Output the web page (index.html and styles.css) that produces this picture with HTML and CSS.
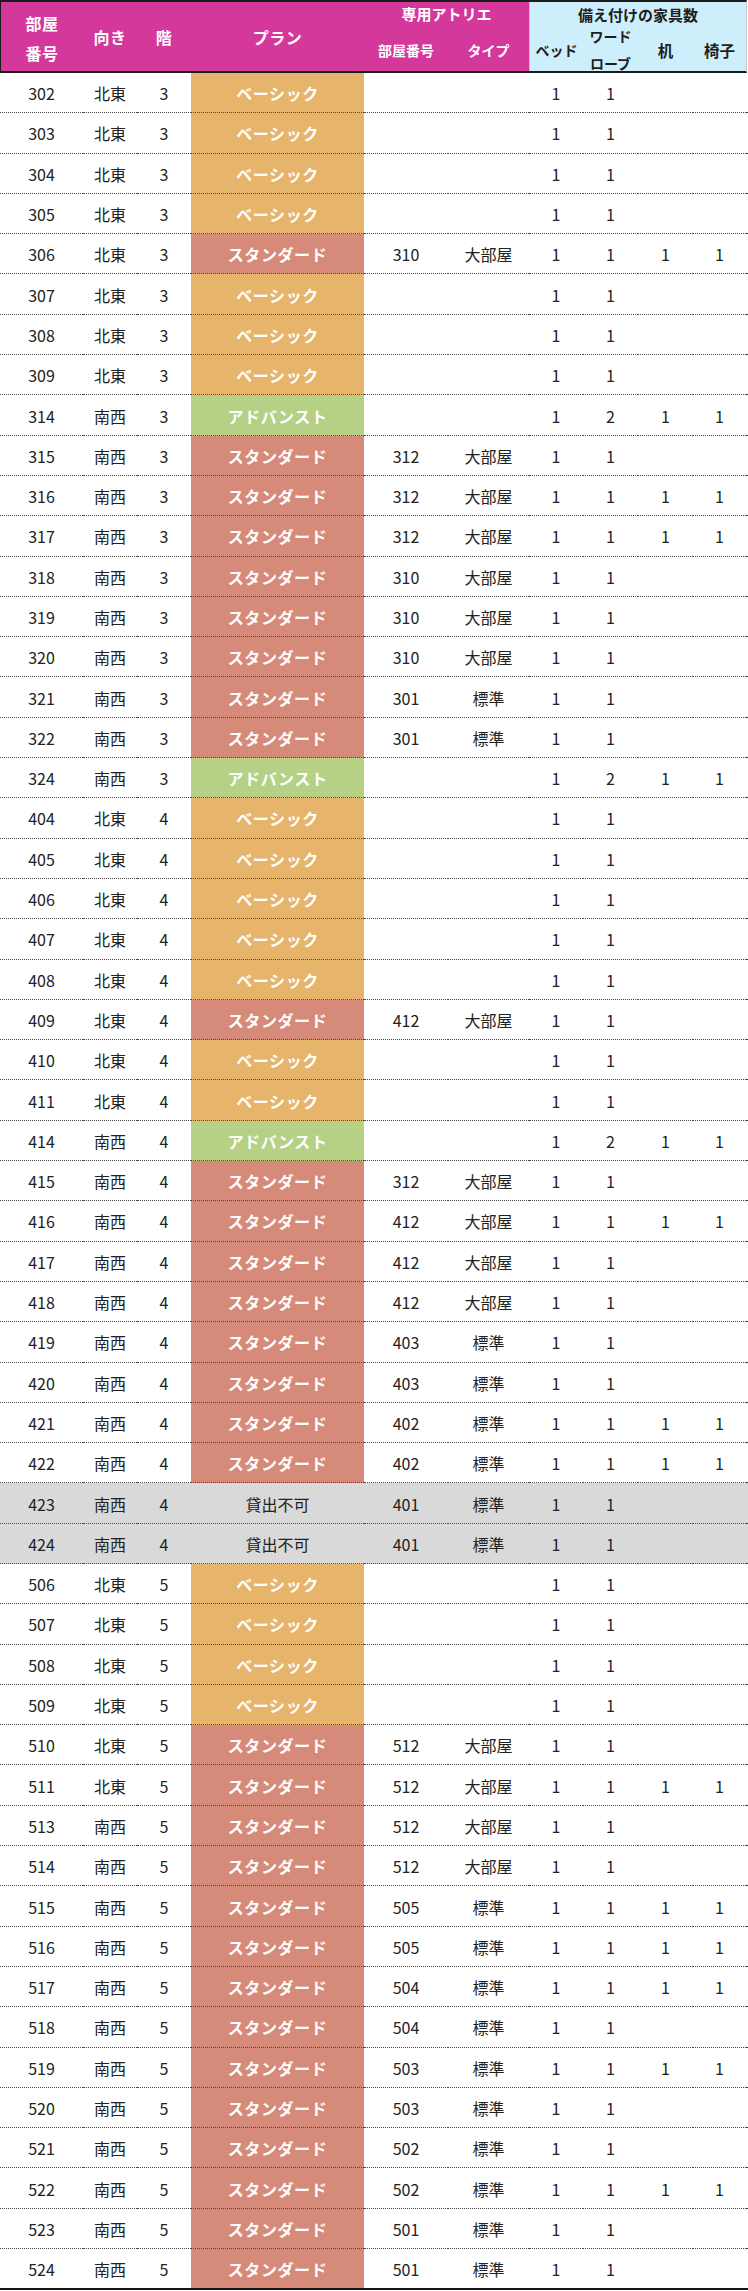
FILE: index.html
```html
<!DOCTYPE html>
<html lang="ja">
<head>
<meta charset="utf-8">
<title>部屋一覧</title>
<link rel="stylesheet" href="styles.css">
</head>
<body>
<div class="sheet">
  <div class="head">
    <div class="h mg span2 two">部屋<br>番号</div>
    <div class="h mg span2">向き</div>
    <div class="h mg span2">階</div>
    <div class="h mg span2">プラン</div>
    <div class="h mg top atl">専用アトリエ</div>
    <div class="h bl top fur">備え付けの家具数</div>
    <div class="h mg sub">部屋番号</div>
    <div class="h mg sub">タイプ</div>
    <div class="h bl sub">ベッド</div>
    <div class="h bl sub wr">ワード<br>ローブ</div>
    <div class="h bl sub big">机</div>
    <div class="h bl sub big">椅子</div>
  </div>
  <div class="body">
    <div class="r"><span>302</span><span>北東</span><span>3</span><span class="p b">ベーシック</span><span></span><span></span><span>1</span><span>1</span><span></span><span></span></div>
    <div class="r"><span>303</span><span>北東</span><span>3</span><span class="p b">ベーシック</span><span></span><span></span><span>1</span><span>1</span><span></span><span></span></div>
    <div class="r"><span>304</span><span>北東</span><span>3</span><span class="p b">ベーシック</span><span></span><span></span><span>1</span><span>1</span><span></span><span></span></div>
    <div class="r"><span>305</span><span>北東</span><span>3</span><span class="p b">ベーシック</span><span></span><span></span><span>1</span><span>1</span><span></span><span></span></div>
    <div class="r"><span>306</span><span>北東</span><span>3</span><span class="p s">スタンダード</span><span>310</span><span>大部屋</span><span>1</span><span>1</span><span>1</span><span>1</span></div>
    <div class="r"><span>307</span><span>北東</span><span>3</span><span class="p b">ベーシック</span><span></span><span></span><span>1</span><span>1</span><span></span><span></span></div>
    <div class="r"><span>308</span><span>北東</span><span>3</span><span class="p b">ベーシック</span><span></span><span></span><span>1</span><span>1</span><span></span><span></span></div>
    <div class="r"><span>309</span><span>北東</span><span>3</span><span class="p b">ベーシック</span><span></span><span></span><span>1</span><span>1</span><span></span><span></span></div>
    <div class="r"><span>314</span><span>南西</span><span>3</span><span class="p a">アドバンスト</span><span></span><span></span><span>1</span><span>2</span><span>1</span><span>1</span></div>
    <div class="r"><span>315</span><span>南西</span><span>3</span><span class="p s">スタンダード</span><span>312</span><span>大部屋</span><span>1</span><span>1</span><span></span><span></span></div>
    <div class="r"><span>316</span><span>南西</span><span>3</span><span class="p s">スタンダード</span><span>312</span><span>大部屋</span><span>1</span><span>1</span><span>1</span><span>1</span></div>
    <div class="r"><span>317</span><span>南西</span><span>3</span><span class="p s">スタンダード</span><span>312</span><span>大部屋</span><span>1</span><span>1</span><span>1</span><span>1</span></div>
    <div class="r"><span>318</span><span>南西</span><span>3</span><span class="p s">スタンダード</span><span>310</span><span>大部屋</span><span>1</span><span>1</span><span></span><span></span></div>
    <div class="r"><span>319</span><span>南西</span><span>3</span><span class="p s">スタンダード</span><span>310</span><span>大部屋</span><span>1</span><span>1</span><span></span><span></span></div>
    <div class="r"><span>320</span><span>南西</span><span>3</span><span class="p s">スタンダード</span><span>310</span><span>大部屋</span><span>1</span><span>1</span><span></span><span></span></div>
    <div class="r"><span>321</span><span>南西</span><span>3</span><span class="p s">スタンダード</span><span>301</span><span>標準</span><span>1</span><span>1</span><span></span><span></span></div>
    <div class="r"><span>322</span><span>南西</span><span>3</span><span class="p s">スタンダード</span><span>301</span><span>標準</span><span>1</span><span>1</span><span></span><span></span></div>
    <div class="r"><span>324</span><span>南西</span><span>3</span><span class="p a">アドバンスト</span><span></span><span></span><span>1</span><span>2</span><span>1</span><span>1</span></div>
    <div class="r"><span>404</span><span>北東</span><span>4</span><span class="p b">ベーシック</span><span></span><span></span><span>1</span><span>1</span><span></span><span></span></div>
    <div class="r"><span>405</span><span>北東</span><span>4</span><span class="p b">ベーシック</span><span></span><span></span><span>1</span><span>1</span><span></span><span></span></div>
    <div class="r"><span>406</span><span>北東</span><span>4</span><span class="p b">ベーシック</span><span></span><span></span><span>1</span><span>1</span><span></span><span></span></div>
    <div class="r"><span>407</span><span>北東</span><span>4</span><span class="p b">ベーシック</span><span></span><span></span><span>1</span><span>1</span><span></span><span></span></div>
    <div class="r"><span>408</span><span>北東</span><span>4</span><span class="p b">ベーシック</span><span></span><span></span><span>1</span><span>1</span><span></span><span></span></div>
    <div class="r"><span>409</span><span>北東</span><span>4</span><span class="p s">スタンダード</span><span>412</span><span>大部屋</span><span>1</span><span>1</span><span></span><span></span></div>
    <div class="r"><span>410</span><span>北東</span><span>4</span><span class="p b">ベーシック</span><span></span><span></span><span>1</span><span>1</span><span></span><span></span></div>
    <div class="r"><span>411</span><span>北東</span><span>4</span><span class="p b">ベーシック</span><span></span><span></span><span>1</span><span>1</span><span></span><span></span></div>
    <div class="r"><span>414</span><span>南西</span><span>4</span><span class="p a">アドバンスト</span><span></span><span></span><span>1</span><span>2</span><span>1</span><span>1</span></div>
    <div class="r"><span>415</span><span>南西</span><span>4</span><span class="p s">スタンダード</span><span>312</span><span>大部屋</span><span>1</span><span>1</span><span></span><span></span></div>
    <div class="r"><span>416</span><span>南西</span><span>4</span><span class="p s">スタンダード</span><span>412</span><span>大部屋</span><span>1</span><span>1</span><span>1</span><span>1</span></div>
    <div class="r"><span>417</span><span>南西</span><span>4</span><span class="p s">スタンダード</span><span>412</span><span>大部屋</span><span>1</span><span>1</span><span></span><span></span></div>
    <div class="r"><span>418</span><span>南西</span><span>4</span><span class="p s">スタンダード</span><span>412</span><span>大部屋</span><span>1</span><span>1</span><span></span><span></span></div>
    <div class="r"><span>419</span><span>南西</span><span>4</span><span class="p s">スタンダード</span><span>403</span><span>標準</span><span>1</span><span>1</span><span></span><span></span></div>
    <div class="r"><span>420</span><span>南西</span><span>4</span><span class="p s">スタンダード</span><span>403</span><span>標準</span><span>1</span><span>1</span><span></span><span></span></div>
    <div class="r"><span>421</span><span>南西</span><span>4</span><span class="p s">スタンダード</span><span>402</span><span>標準</span><span>1</span><span>1</span><span>1</span><span>1</span></div>
    <div class="r"><span>422</span><span>南西</span><span>4</span><span class="p s">スタンダード</span><span>402</span><span>標準</span><span>1</span><span>1</span><span>1</span><span>1</span></div>
    <div class="r na"><span>423</span><span>南西</span><span>4</span><span>貸出不可</span><span>401</span><span>標準</span><span>1</span><span>1</span><span></span><span></span></div>
    <div class="r na"><span>424</span><span>南西</span><span>4</span><span>貸出不可</span><span>401</span><span>標準</span><span>1</span><span>1</span><span></span><span></span></div>
    <div class="r"><span>506</span><span>北東</span><span>5</span><span class="p b">ベーシック</span><span></span><span></span><span>1</span><span>1</span><span></span><span></span></div>
    <div class="r"><span>507</span><span>北東</span><span>5</span><span class="p b">ベーシック</span><span></span><span></span><span>1</span><span>1</span><span></span><span></span></div>
    <div class="r"><span>508</span><span>北東</span><span>5</span><span class="p b">ベーシック</span><span></span><span></span><span>1</span><span>1</span><span></span><span></span></div>
    <div class="r"><span>509</span><span>北東</span><span>5</span><span class="p b">ベーシック</span><span></span><span></span><span>1</span><span>1</span><span></span><span></span></div>
    <div class="r"><span>510</span><span>北東</span><span>5</span><span class="p s">スタンダード</span><span>512</span><span>大部屋</span><span>1</span><span>1</span><span></span><span></span></div>
    <div class="r"><span>511</span><span>北東</span><span>5</span><span class="p s">スタンダード</span><span>512</span><span>大部屋</span><span>1</span><span>1</span><span>1</span><span>1</span></div>
    <div class="r"><span>513</span><span>南西</span><span>5</span><span class="p s">スタンダード</span><span>512</span><span>大部屋</span><span>1</span><span>1</span><span></span><span></span></div>
    <div class="r"><span>514</span><span>南西</span><span>5</span><span class="p s">スタンダード</span><span>512</span><span>大部屋</span><span>1</span><span>1</span><span></span><span></span></div>
    <div class="r"><span>515</span><span>南西</span><span>5</span><span class="p s">スタンダード</span><span>505</span><span>標準</span><span>1</span><span>1</span><span>1</span><span>1</span></div>
    <div class="r"><span>516</span><span>南西</span><span>5</span><span class="p s">スタンダード</span><span>505</span><span>標準</span><span>1</span><span>1</span><span>1</span><span>1</span></div>
    <div class="r"><span>517</span><span>南西</span><span>5</span><span class="p s">スタンダード</span><span>504</span><span>標準</span><span>1</span><span>1</span><span>1</span><span>1</span></div>
    <div class="r"><span>518</span><span>南西</span><span>5</span><span class="p s">スタンダード</span><span>504</span><span>標準</span><span>1</span><span>1</span><span></span><span></span></div>
    <div class="r"><span>519</span><span>南西</span><span>5</span><span class="p s">スタンダード</span><span>503</span><span>標準</span><span>1</span><span>1</span><span>1</span><span>1</span></div>
    <div class="r"><span>520</span><span>南西</span><span>5</span><span class="p s">スタンダード</span><span>503</span><span>標準</span><span>1</span><span>1</span><span></span><span></span></div>
    <div class="r"><span>521</span><span>南西</span><span>5</span><span class="p s">スタンダード</span><span>502</span><span>標準</span><span>1</span><span>1</span><span></span><span></span></div>
    <div class="r"><span>522</span><span>南西</span><span>5</span><span class="p s">スタンダード</span><span>502</span><span>標準</span><span>1</span><span>1</span><span>1</span><span>1</span></div>
    <div class="r"><span>523</span><span>南西</span><span>5</span><span class="p s">スタンダード</span><span>501</span><span>標準</span><span>1</span><span>1</span><span></span><span></span></div>
    <div class="r last"><span>524</span><span>南西</span><span>5</span><span class="p s">スタンダード</span><span>501</span><span>標準</span><span>1</span><span>1</span><span></span><span></span></div>
  </div>
</div>
</body>
</html>
```
FILE: styles.css
```css
html, body {
  margin: 0;
  padding: 0;
  background: #ffffff;
}

body {
  font-family: "Noto Sans CJK JP", "Noto Sans", sans-serif;
  font-size: 16px;
  color: #222222;
}

.sheet {
  width: 748px;
}

/* ---------- header ---------- */
.head {
  display: grid;
  grid-template-columns: 82px 54px 54px 173px 84px 81px 54px 55px 55px 53px;
  grid-template-rows: 24px 45px;
  width: 745px;
  border-top: 2px solid #1b1b1b;
  border-left: 1px solid #1b1b1b;
  border-bottom: 2px solid #1b1b1b;
  border-right: 1px solid #c9c9c9;
}

.h {
  display: flex;
  align-items: center;
  justify-content: center;
  text-align: center;
  font-weight: 700;
  line-height: 1.2;
}

.mg {
  background: #d4389a;
  color: #ffffff;
}

.bl {
  background: #cdeefb;
  color: #1e1e1e;
}

.span2 {
  grid-row: 1 / 3;
  padding-top: 3px;
  font-size: 16px;
  letter-spacing: 0.5px;
}

.two {
  line-height: 30px;
}

.top {
  font-size: 15px;
  padding-top: 1px;
}

.atl {
  grid-column: 5 / 7;
  padding-top: 0;
}

.fur {
  grid-column: 7 / 11;
  padding-top: 2px;
  border-left: 1px solid #e7a9cd;
}

.sub {
  font-size: 14px;
  padding-top: 3px;
}

.sub.bl:nth-of-type(9) {
  border-left: 1px solid #e7a9cd;
}

.wr {
  line-height: 27px;
}

.big {
  font-size: 15.5px;
}

/* ---------- body ---------- */
.body {
  border-bottom: 2px solid #151515;
  width: 748px;
}

.r {
  display: grid;
  grid-template-columns: 83px 54px 54px 173px 84px 81px 54px 55px 55px 53px 1fr;
  height: 40.3px;
}

.r::after {
  content: "";
  border-bottom: 1px dotted #4a4a4a;
}

.r > span {
  display: flex;
  align-items: center;
  justify-content: center;
  border-bottom: 1px dotted #4a4a4a;
  padding-top: 1px;
  white-space: nowrap;
}

.r.last {
  height: 39px;
}

.r.last > span,
.r.last::after {
  border-bottom: none;
}

.r.na {
  background: #d9d9d9;
}

.p {
  color: #ffffff;
  font-weight: 700;
  letter-spacing: 0.6px;
}

.p.b {
  background: #e7b46c;
}

.p.s {
  background: #d58a7a;
}

.p.a {
  background: #b6d086;
}
```
